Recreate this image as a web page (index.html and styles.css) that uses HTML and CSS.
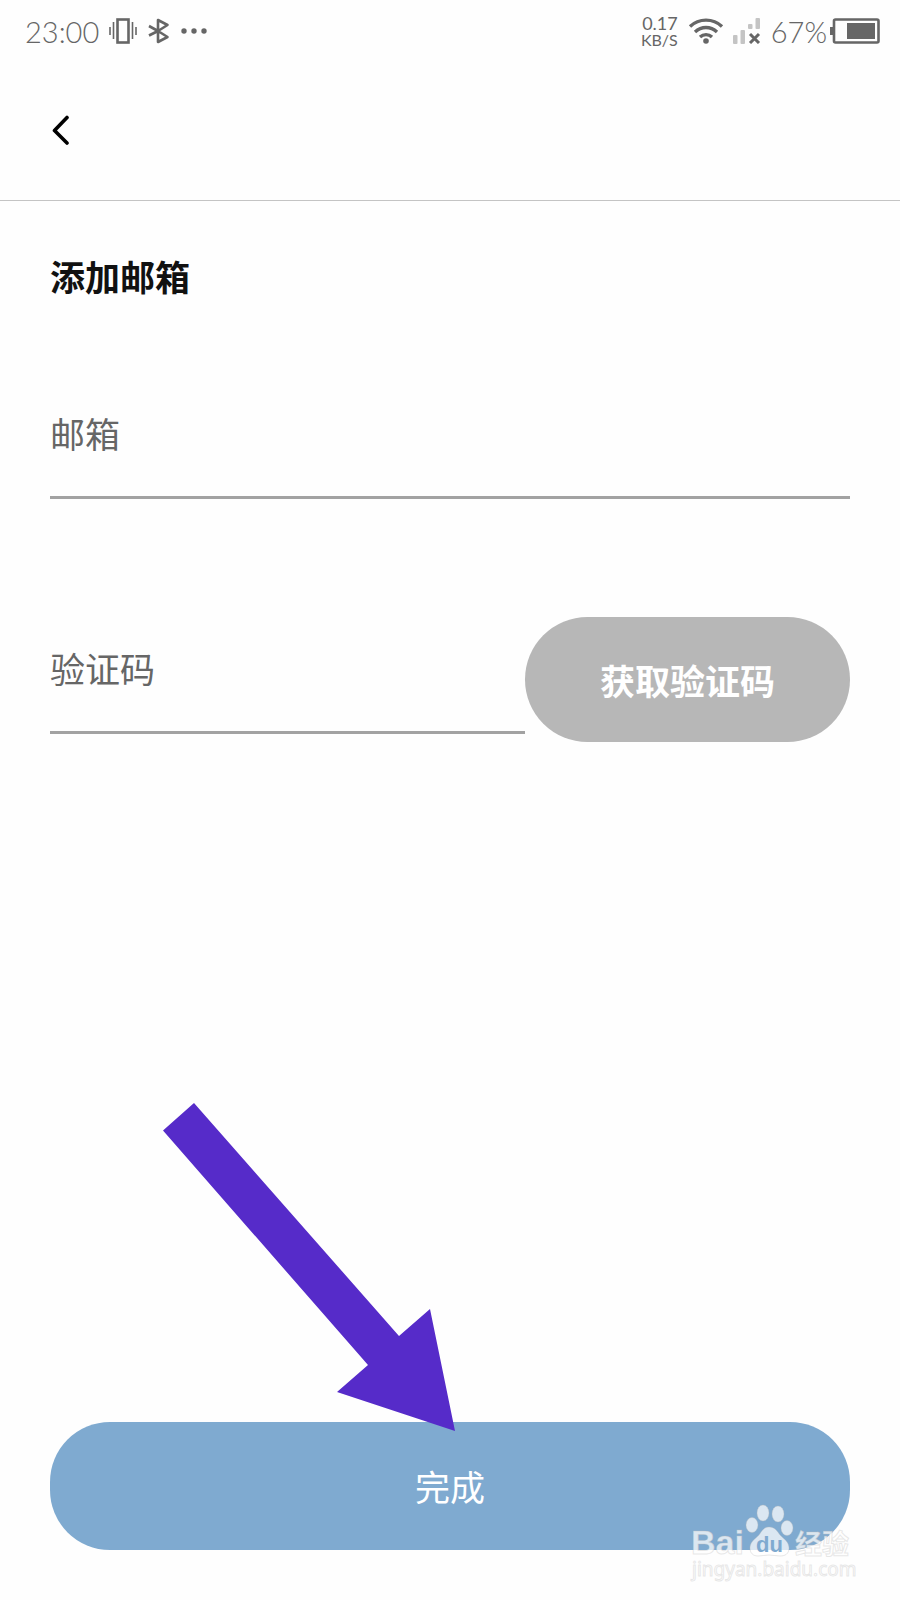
FILE: index.html
```html
<!DOCTYPE html>
<html lang="zh-CN">
<head>
  <meta charset="utf-8">
  <meta name="viewport" content="width=device-width, initial-scale=1">
  <title>添加邮箱</title>
  <link rel="stylesheet" href="styles.css">
</head>
<body>
  <div class="screen">
    <div class="status">
      <div class="status-group">
        <span class="clock">23:00</span>
        <svg class="icon-vibrate" width="28" height="26" viewBox="0 0 28 26" fill="none" stroke="#666">
          <rect x="8.500" y="1.500" width="11" height="23" stroke-width="2.600"/>
          <path d="M4.500 4v17M23.500 4v17M1 9v8M27 9v8" stroke-width="1.600"/>
        </svg>
        <svg class="icon-bluetooth" width="22" height="26" viewBox="0 0 22 26" fill="none" stroke="#666" stroke-width="2.600" stroke-linejoin="round">
          <path d="M1 8l9 5 9.500 6L10 24V2l9.500 5L10 13l-9 4.500"/>
        </svg>
        <svg width="26" height="6" viewBox="0 0 26 6" fill="#666">
          <circle cx="3" cy="3" r="2.700"/><circle cx="13" cy="3" r="2.700"/><circle cx="23" cy="3" r="2.700"/>
        </svg>
      </div>
      <div class="status-group">
        <div class="speed"><span>0.17</span><span class="unit">KB/S</span></div>
        <svg class="icon-wifi" width="36" height="26" viewBox="0 0 36 26" fill="none" stroke="#666" stroke-width="3.400">
          <path d="M2 8.500C11 0 25 0 34 8.500M7 14c6.500-6 15.500-6 22 0M12 19c3.500-3.200 8.500-3.200 12 0"/>
          <circle cx="18" cy="23" r="2.800" fill="#666" stroke="none"/>
        </svg>
        <svg class="icon-signal" width="28" height="26" viewBox="0 0 28 26">
          <g fill="#c4c4c4">
            <rect x="0" y="17" width="4.500" height="9" rx="1"/>
            <rect x="7.500" y="12" width="4.500" height="14" rx="1"/>
            <rect x="15" y="6" width="4.500" height="5" rx="1"/>
            <rect x="22.500" y="0" width="4.500" height="11" rx="1"/>
          </g>
          <path d="M17 16l9 9M26 16l-9 9" stroke="#666" stroke-width="3"/>
        </svg>
        <span class="percent">67%</span>
        <svg width="50" height="26" viewBox="0 0 50 26">
          <path d="M0 9h4v8H0z" fill="#666"/>
          <rect x="4" y="1.500" width="44.500" height="23" rx="1.500" fill="none" stroke="#666" stroke-width="2.600"/>
          <rect x="17" y="5" width="28" height="16" fill="#666"/>
        </svg>
      </div>
    </div>

    <header class="topbar">
      <button class="back" type="button" aria-label="返回">
        <svg width="18" height="30" viewBox="0 0 18 30" fill="none" stroke="#000" stroke-width="3.600" stroke-linecap="round" stroke-linejoin="round">
          <path d="M15 2.500L2.500 15.500 15 28"/>
        </svg>
      </button>
    </header>

    <form class="form">
      <h1 class="title">添加邮箱</h1>
      <input class="field" type="email" placeholder="邮箱" aria-label="邮箱">
      <div class="code-row">
        <input class="field" type="text" placeholder="验证码" aria-label="验证码">
        <button class="code-button" type="button">获取验证码</button>
      </div>
      <div class="footer">
        <button class="submit" type="button">完成</button>
        <svg class="arrow" width="292" height="328" viewBox="0 0 292 328" fill="#562bc9">
          <path d="M31 0L236 233l31-27 25 122-118-39 31-27L0 27.500z"/>
        </svg>
      </div>
    </form>

    <svg class="watermark" width="170" height="84" viewBox="0 0 170 84">
      <g class="mark">
        <text class="mark-brand" x="5" y="54">Bai</text>
        <ellipse cx="66" cy="25" rx="6" ry="7.500"/>
        <ellipse cx="77" cy="13" rx="6" ry="8"/>
        <ellipse cx="92" cy="14" rx="6" ry="8"/>
        <ellipse cx="101" cy="28" rx="6" ry="7.500"/>
        <path d="M83 27c6 0 8 4 11 8 4 4 9 7 9 13s-4 8-9 8c-4 0-7-1-11-1s-7 1-11 1c-5 0-8-3-8-8 0-6 5-9 9-13 3-4 5-8 10-8z"/>
        <text class="mark-cn" x="109" y="54">经验</text>
        <text class="mark-url" x="6" y="76">jingyan.baidu.com</text>
      </g>
      <text class="mark-du" x="70" y="52">du</text>
    </svg>
  </div>
</body>
</html>
```

FILE: styles.css
```css
* {
  box-sizing: border-box;
}

body {
  margin: 0;
  background: #fefefe;
  font-family: "Noto Sans CJK SC", sans-serif;
}

button,
input {
  font: inherit;
  border: 0;
  border-radius: 0;
  padding: 0;
  background: none;
}

.screen {
  position: relative;
  display: flex;
  flex-direction: column;
  min-height: 100vh;
}

.status {
  display: flex;
  justify-content: space-between;
  align-items: center;
  height: 62px;
  padding: 0 20px 0 25px;
  color: #666;
  font-family: Lato, sans-serif;
  font-size: 29px;
}

.status-group {
  display: flex;
  align-items: center;
}

.clock {
  margin-right: 10px;
}

.clock,
.percent {
  font-weight: 300;
}

.percent {
  margin-right: 3px;
}

.icon-vibrate {
  margin-right: 11px;
}

.icon-bluetooth {
  margin-right: 11px;
}

.speed {
  display: flex;
  flex-direction: column;
  align-items: flex-end;
  margin-right: 10px;
  font-size: 18px;
  line-height: 18px;
}

.unit {
  font-size: 16px;
  line-height: 16px;
}

.icon-wifi {
  margin-right: 9px;
}

.icon-signal {
  margin-right: 10px;
}

.topbar {
  display: flex;
  align-items: center;
  height: 139px;
  padding: 0 50px 2px;
  border-bottom: 1px solid #c4c4c4;
}

.back {
  display: flex;
  padding: 0 2px;
}

.form {
  flex: 1;
  display: flex;
  flex-direction: column;
  padding: 51px 50px 50px;
  font-size: 35px;
  line-height: 48px;
}

.title {
  margin: 0 0 108px;
  color: #111;
  font-size: inherit;
  font-weight: 700;
}

.field {
  flex: 1;
  min-width: 0;
  height: 91px;
  padding-bottom: 40px;
  border-bottom: 3px solid #a2a2a2;
  color: #111;
}

.form > .field {
  flex: none;
}

.field::placeholder {
  color: #666;
  opacity: 1;
}

.code-row {
  display: flex;
  align-items: center;
  margin-top: 118px;
}

.code-row .field {
  margin-top: 18px;
}

.code-button {
  width: 325px;
  height: 125px;
  border-radius: 63px;
  background: #b7b7b7;
  color: #fff;
  font-weight: 700;
}

.footer {
  position: relative;
  display: flex;
  margin-top: auto;
}

.submit {
  flex: 1;
  height: 128px;
  border-radius: 60px;
  background: #7faad0;
  color: #fff;
}

.arrow {
  position: absolute;
  right: calc(50% - 5px);
  bottom: 119px;
}

.watermark {
  position: absolute;
  right: 44px;
  bottom: 16px;
}

.mark {
  fill: #fff;
  fill-opacity: 0.72;
  stroke: #bbb;
  stroke-opacity: 0.35;
  stroke-width: 1px;
}

.mark-brand {
  font: 700 34px "Liberation Sans", sans-serif;
}

.mark-cn {
  font: 700 27px "Noto Sans CJK SC", sans-serif;
}

.mark-url {
  font: 400 19px "Noto Sans", sans-serif;
}

.mark-du {
  fill: #7faad0;
  font: 700 22px "Liberation Sans", sans-serif;
}
```
